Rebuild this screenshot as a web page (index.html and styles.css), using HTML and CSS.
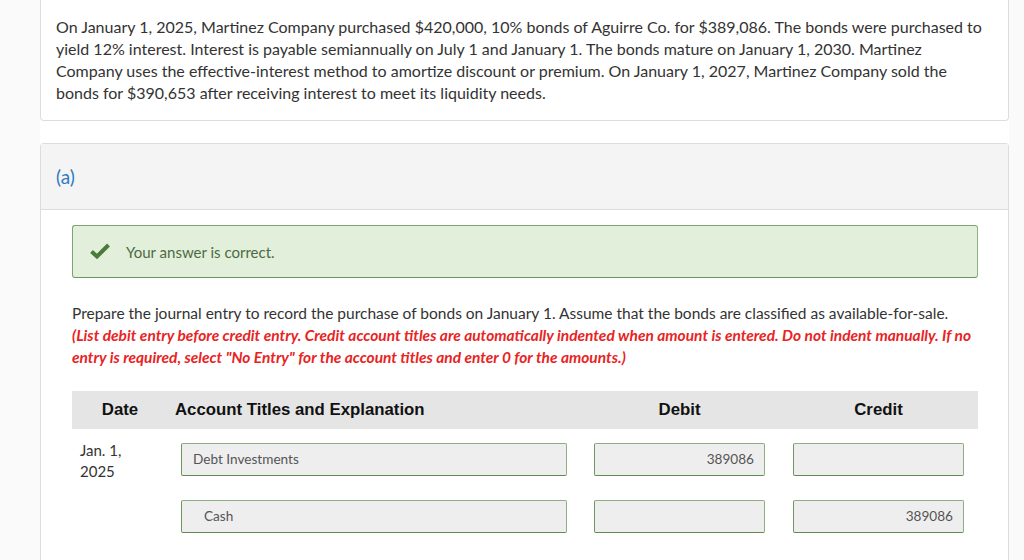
FILE: index.html
```html
<!DOCTYPE html>
<html>
<head>
<meta charset="utf-8">
<link rel="stylesheet" href="styles.css">
</head>
<body>
<div class="column">
  <div class="question">
    On January 1, 2025, Martinez Company purchased $420,000, 10% bonds of Aguirre Co. for $389,086. The bonds were purchased to yield 12% interest. Interest is payable semiannually on July 1 and January 1. The bonds mature on January 1, 2030. Martinez Company uses the effective-interest method to amortize discount or premium. On January 1, 2027, Martinez Company sold the bonds for $390,653 after receiving interest to meet its liquidity needs.
  </div>
  <div class="part">
    <div class="part-head">(a)</div>
    <div class="part-body">
      <div class="correct">
        <svg class="check" width="20" height="16" viewBox="0 0 20 16"><path d="M1.5 8.5 L7 13.5 L18.5 2" fill="none" stroke="#4a7a3c" stroke-width="4" stroke-linejoin="miter"/></svg>
        <span>Your answer is correct.</span>
      </div>
      <p class="prompt">Prepare the journal entry to record the purchase of bonds on January 1. Assume that the bonds are classified as available-for-sale.<br>
      <em class="note">(List debit entry before credit entry. Credit account titles are automatically indented when amount is entered. Do not indent manually. If no entry is required, select "No Entry" for the account titles and enter 0 for the amounts.)</em></p>
      <div class="journal">
        <div class="jrow jhead">
          <div class="c-date">Date</div>
          <div class="c-acct">Account Titles and Explanation</div>
          <div class="c-amt">Debit</div>
          <div class="c-amt">Credit</div>
        </div>
        <div class="jrow entry">
          <div class="c-date date-text">Jan. 1,<br>2025</div>
          <div class="c-acct"><div class="field">Debt Investments</div></div>
          <div class="c-amt"><div class="field num">389086</div></div>
          <div class="c-amt"><div class="field num"></div></div>
        </div>
        <div class="jrow entry">
          <div class="c-date"></div>
          <div class="c-acct"><div class="field indent">Cash</div></div>
          <div class="c-amt"><div class="field num"></div></div>
          <div class="c-amt"><div class="field num">389086</div></div>
        </div>
      </div>
    </div>
  </div>
</div>
</body>
</html>
```
FILE: styles.css
```css
html, body {
  margin: 0;
  padding: 0;
  background: #fafafa;
  font-family: Lato, "Liberation Sans", sans-serif;
  color: #333;
}
.column {
  margin-left: 40px;
  width: 969px;
  min-height: 560px;
  background: #fff;
}
.question {
  border: 1px solid #ddd;
  border-top: none;
  border-radius: 0 0 4px 4px;
  padding: 16px 18px 16px 15px;
  font-size: 16px;
  line-height: 22px;
  color: #333;
  height: 88px;
}
.part {
  margin-top: 22px;
  border: 1px solid #ddd;
  border-bottom: none;
  border-radius: 4px 4px 0 0;
}
.part-head {
  background: #f4f4f4;
  height: 65px;
  border-bottom: 1px solid #ddd;
  padding-left: 15px;
  font-size: 19px;
  line-height: 66px;
  color: #2f7bc0;
}
.part-body {
  padding: 16px 30px 40px 31px;
}
.correct {
  display: flex;
  align-items: center;
  height: 51px;
  margin-top: -1px;
  background: #e2efda;
  border: 1px solid #7da36f;
  border-right-color: #8fb083;
  border-bottom-color: #6b955c;
  border-radius: 3px;
  padding-left: 17px;
  font-size: 15px;
  color: #4d6b43;
}
.check {
  margin-right: 16px;
  margin-top: -2px;
}
.prompt {
  margin: 24px 0 0 0;
  font-size: 15.5px;
  line-height: 22px;
  color: #333;
}
.note {
  color: #e8241f;
  font-weight: bold;
  font-style: italic;
  font-size: 15.5px;
}
.journal {
  margin-top: 23px;
}
.jrow {
  display: grid;
  grid-template-columns: 109px 413px 199px 184px;
}
.jhead {
  background: #e5e5e5;
  height: 38px;
  align-items: center;
  font-family: "Liberation Sans", Arial, sans-serif;
  font-weight: bold;
  font-size: 16.8px;
  color: #111;
}
.jhead .c-date {
  text-align: center;
  padding-right: 13px;
}
.jhead .c-acct {
  margin-left: -6px;
}
.jhead .c-amt {
  text-align: center;
  width: 171px;
}
.entry {
  margin-top: 14px;
  height: 43px;
}
.entry + .entry {
  margin-top: 14px;
}
.date-text {
  font-size: 15px;
  line-height: 21px;
  padding-left: 8px;
  margin-top: -3px;
  color: #333;
}
.entry .c-acct .field {
  width: 386px;
}
.entry .c-amt .field {
  width: 171px;
}
.field {
  box-sizing: border-box;
  height: 33px;
  background: #eeeeee;
  border: 1px solid #8fae85;
  border-bottom-color: #5f8a50;
  border-left-color: #6f9762;
  border-radius: 2px;
  font-size: 13.6px;
  line-height: 31px;
  color: #555;
  padding: 0 10px 0 11px;
}
.field.indent {
  padding-left: 22px;
}
.field.num {
  text-align: right;
}
```
